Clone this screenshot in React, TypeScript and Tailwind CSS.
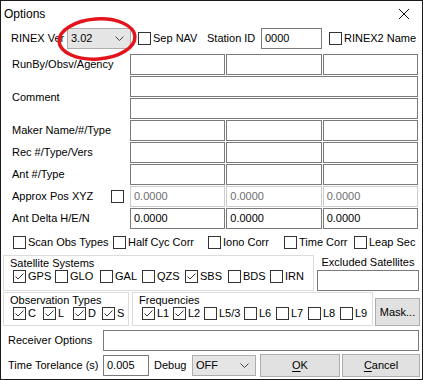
import type { ReactNode } from "react";

function Check({ checked }: { checked?: boolean }) {
  return (
    <span className="w-[13px] h-[13px] border border-[#333333] bg-white flex items-center justify-center shrink-0">
      {checked && (
        <svg width="11" height="11" viewBox="0 0 11 11">
          <path d="M1.5 5.5 L4 8 L9.5 2.5" fill="none" stroke="#333333" strokeWidth="1" />
        </svg>
      )}
    </span>
  );
}

function CheckItem({ label, checked, className = "" }: { label: string; checked?: boolean; className?: string }) {
  return (
    <div className={`flex items-center gap-[2px] whitespace-nowrap ${className}`}>
      <Check checked={checked} />
      <span>{label}</span>
    </div>
  );
}

function Field({ value = "", disabled, className = "" }: { value?: string; disabled?: boolean; className?: string }) {
  return (
    <div
      className={`h-[21px] border bg-white flex items-center pl-[3px] ${
        disabled ? "border-[#cccccc] text-[#6d6d6d]" : "border-[#7a7a7a]"
      } ${className}`}
    >
      {value}
    </div>
  );
}

function Row({ label, extra, children }: { label: string; extra?: ReactNode; children: ReactNode }) {
  return (
    <div className="flex">
      <div className="w-[129px] pl-[11px] pr-[6px] flex items-center whitespace-nowrap">
        <span>{label}</span>
        {extra && <span className="ml-auto">{extra}</span>}
      </div>
      <div className="w-[288px]">{children}</div>
    </div>
  );
}

function Three({ values = ["", "", ""], disabled }: { values?: string[]; disabled?: boolean }) {
  return (
    <div className="grid grid-cols-3 gap-x-[1px]">
      {values.map((v, i) => (
        <Field key={i} value={v} disabled={disabled} />
      ))}
    </div>
  );
}

function Chevron() {
  return (
    <svg width="9" height="5" viewBox="0 0 9 5">
      <path d="M0.5 0.5 L4.5 4.5 L8.5 0.5" fill="none" stroke="#444444" strokeWidth="1" />
    </svg>
  );
}

function Button({ children, className = "" }: { children: ReactNode; className?: string }) {
  return (
    <div className={`bg-[#e1e1e1] border border-[#adadad] flex items-center justify-center ${className}`}>
      {children}
    </div>
  );
}

export default function App() {
  return (
    <div className="relative w-[423px] h-[380px] border border-[#1a1a1a] bg-white text-[11px] text-black font-['Liberation_Sans',Arial,sans-serif] leading-none">
      {/* title bar */}
      <div className="h-[25px] flex items-center justify-between pl-[3px] pr-[13px]">
        <span className="text-[12px]">Options</span>
        <svg width="10" height="10" viewBox="0 0 10 10">
          <path d="M0 0 L10 10 M10 0 L0 10" stroke="#111111" strokeWidth="1" />
        </svg>
      </div>

      {/* rinex version row */}
      <div className="h-[23px] flex items-center pl-[10px] mt-[1px]">
        <span className="w-[56px] whitespace-nowrap">RINEX Ver</span>
        <div className="w-[64px] h-[21px] bg-[#e5e5e5] border border-[#adadad] flex items-center justify-between pl-[3px] pr-[6px]">
          <span>3.02</span>
          <Chevron />
        </div>
        <CheckItem label="Sep NAV" className="ml-[7px] w-[69px]" />
        <span className="w-[54px] whitespace-nowrap">Station ID</span>
        <Field value="0000" className="w-[61px]" />
        <CheckItem label="RINEX2 Name" className="ml-[7px]" />
      </div>

      {/* header fields */}
      <div className="mt-[4px] flex flex-col gap-[1px]">
        <Row label="RunBy/Obsv/Agency">
          <Three />
        </Row>
        <div className="flex">
          <div className="w-[129px] pl-[11px] flex items-center">Comment</div>
          <div className="w-[288px] flex flex-col gap-[1px]">
            <Field />
            <Field />
          </div>
        </div>
        <Row label="Maker Name/#/Type">
          <Three />
        </Row>
        <Row label="Rec #/Type/Vers">
          <Three />
        </Row>
        <Row label="Ant #/Type">
          <Three />
        </Row>
        <Row label="Approx Pos XYZ" extra={<Check />}>
          <Three values={["0.0000", "0.0000", "0.0000"]} disabled />
        </Row>
        <Row label="Ant Delta H/E/N">
          <Three values={["0.0000", "0.0000", "0.0000"]} />
        </Row>
      </div>

      {/* option checkboxes */}
      <div className="mt-[6px] h-[15px] flex items-center pl-[12px]">
        <CheckItem label="Scan Obs Types" className="w-[100px]" />
        <CheckItem label="Half Cyc Corr" className="w-[95px]" />
        <CheckItem label="Iono Corr" className="w-[76px]" />
        <CheckItem label="Time Corr" className="w-[70px]" />
        <CheckItem label="Leap Sec" />
      </div>

      {/* satellite systems */}
      <div className="mt-[5px] flex">
        <div className="ml-[2px] w-[311px] border border-[#dcdcdc] pb-[4px]">
          <div className="h-[14px] pl-[6px] pt-[2px]">Satellite Systems</div>
          <div className="flex pl-[9px]">
            <CheckItem label="GPS" checked className="w-[42px]" />
            <CheckItem label="GLO" className="w-[45px]" />
            <CheckItem label="GAL" className="w-[42px]" />
            <CheckItem label="QZS" className="w-[43px]" />
            <CheckItem label="SBS" checked className="w-[43px]" />
            <CheckItem label="BDS" className="w-[42px]" />
            <CheckItem label="IRN" />
          </div>
        </div>
        <div className="ml-[3px] w-[102px] flex flex-col">
          <div className="h-[15px] flex items-center justify-center whitespace-nowrap">Excluded Satellites</div>
          <Field />
        </div>
      </div>

      {/* observation types / frequencies */}
      <div className="mt-[1px] flex">
        <div className="ml-[2px] w-[126px] h-[34px] border border-[#dcdcdc]">
          <div className="h-[14px] pl-[6px] pt-[2px] whitespace-nowrap">Observation Types</div>
          <div className="flex pl-[9px]">
            <CheckItem label="C" checked className="w-[30px]" />
            <CheckItem label="L" checked className="w-[30px]" />
            <CheckItem label="D" checked className="w-[29px]" />
            <CheckItem label="S" checked />
          </div>
        </div>
        <div className="ml-[3px] w-[241px] h-[34px] border border-[#dcdcdc]">
          <div className="h-[14px] pl-[6px] pt-[2px]">Frequencies</div>
          <div className="flex pl-[9px]">
            <CheckItem label="L1" checked className="w-[31px]" />
            <CheckItem label="L2" checked className="w-[31px]" />
            <CheckItem label="L5/3" className="w-[40px]" />
            <CheckItem label="L6" className="w-[32px]" />
            <CheckItem label="L7" className="w-[32px]" />
            <CheckItem label="L8" className="w-[32px]" />
            <CheckItem label="L9" />
          </div>
        </div>
        <Button className="ml-[2px] mt-[6px] w-[45px] h-[28px]">Mask...</Button>
      </div>

      {/* receiver options */}
      <div className="mt-[4px] flex items-center">
        <div className="w-[102px] pl-[7px] whitespace-nowrap">Receiver Options</div>
        <Field className="w-[316px]" />
      </div>

      {/* time tolerance / debug / buttons */}
      <div className="mt-[3px] flex items-center">
        <div className="w-[102px] pl-[7px] whitespace-nowrap">Time Torelance (s)</div>
        <Field value="0.005" className="w-[46px]" />
        <span className="ml-[5px] w-[38px]">Debug</span>
        <div className="w-[64px] h-[21px] bg-[#e5e5e5] border border-[#adadad] flex items-center justify-between pl-[3px] pr-[6px]">
          <span>OFF</span>
          <Chevron />
        </div>
        <Button className="ml-[4px] w-[80px] h-[23px]">
          <span className="underline underline-offset-2">O</span>K
        </Button>
        <Button className="ml-[2px] w-[78px] h-[23px]">
          <span className="underline underline-offset-2">C</span>ancel
        </Button>
      </div>

      {/* red highlight around the version combo */}
      <svg className="absolute left-[55px] top-[15px] pointer-events-none" width="82" height="46" viewBox="0 0 82 46">
        <ellipse cx="41" cy="23" rx="38" ry="20" fill="none" stroke="#e3141b" strokeWidth="3.5" transform="rotate(-4 41 23)" />
      </svg>
    </div>
  );
}
